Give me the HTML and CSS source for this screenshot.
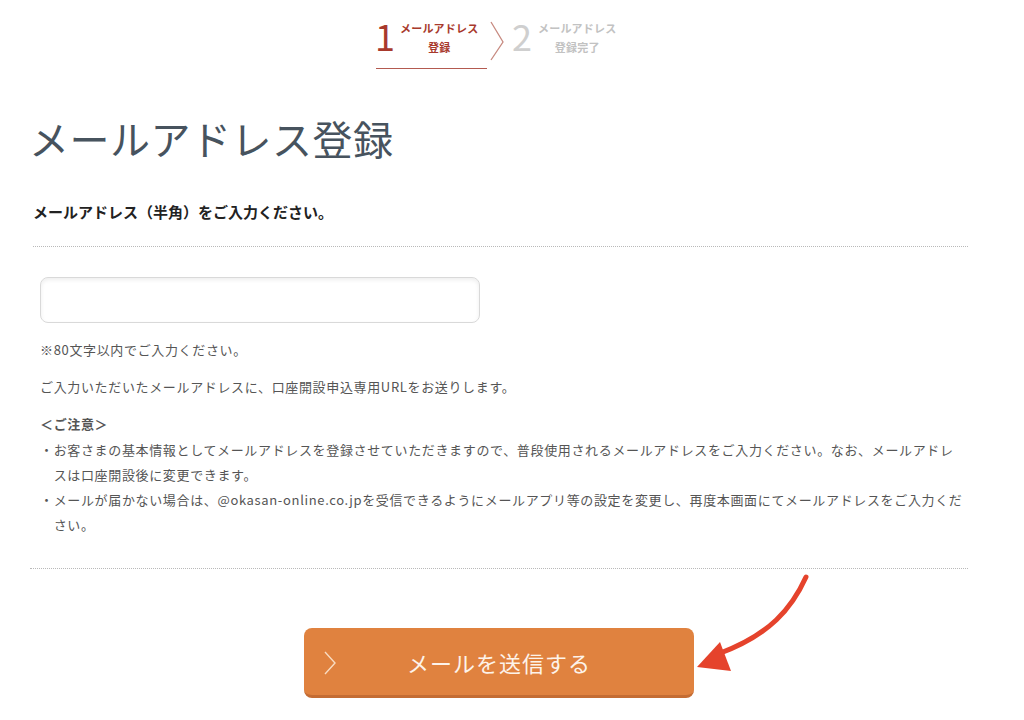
FILE: index.html
```html
<!DOCTYPE html>
<html lang="ja">
<head>
<meta charset="utf-8">
<title>メールアドレス登録</title>
<link rel="stylesheet" href="styles.css">
</head>
<body>
<div class="page">
  <nav class="steps">
    <div class="step step-active">
      <span class="step-num">1</span>
      <span class="step-label">メールアドレス<br>登録</span>
    </div>
    <svg class="step-sep" width="18" height="44" viewBox="0 0 18 44"><path d="M2 2 L14 22 L2 40" fill="none" stroke="#c78a80" stroke-width="1.3"/></svg>
    <div class="step step-next">
      <span class="step-num">2</span>
      <span class="step-label">メールアドレス<br>登録完了</span>
    </div>
  </nav>

  <h1 class="title">メールアドレス登録</h1>
  <p class="lead">メールアドレス（半角）をご入力ください。</p>

  <div class="form-area">
    <div class="input-box"></div>
    <p class="note note-first">※80文字以内でご入力ください。</p>
    <p class="note note-second">ご入力いただいたメールアドレスに、口座開設申込専用URLをお送りします。</p>
    <p class="caution-head">＜ご注意＞</p>
    <ul class="caution-list">
      <li>・お客さまの基本情報としてメールアドレスを登録させていただきますので、普段使用されるメールアドレスをご入力ください。なお、メールアドレ<br>スは口座開設後に変更できます。</li>
      <li>・メールが届かない場合は、@okasan-online.co.jpを受信できるようにメールアプリ等の設定を変更し、再度本画面にてメールアドレスをご入力くだ<br>さい。</li>
    </ul>
  </div>

  <div class="actions">
    <button class="send-btn" type="button">
      <svg class="btn-chev" width="14" height="24" viewBox="0 0 14 24"><path d="M2 1 L12 12 L2 23" fill="none" stroke="#f8dcc2" stroke-width="1.4"/></svg>
      <span class="btn-text">メールを送信する</span>
    </button>
  </div>
</div>

<svg class="annot" width="1024" height="720" viewBox="0 0 1024 720">
  <path d="M806 577 C 792 608, 770 635, 718 654" fill="none" stroke="#e5432c" stroke-width="5" stroke-linecap="round"/>
  <polygon points="697,667 720,642 731,671" fill="#e5432c"/>
</svg>
</body>
</html>
```

FILE: styles.css
```css
html, body {
  margin: 0;
  padding: 0;
  background: #ffffff;
}

body {
  font-family: "Noto Sans CJK JP", "Noto Sans", sans-serif;
  color: #333;
  width: 1024px;
  height: 720px;
  overflow: hidden;
  position: relative;
}

.page {
  width: 938px;
  margin-left: 30px;
}

/* step indicator */
.steps {
  display: flex;
  align-items: flex-start;
  height: 70px;
  margin-left: 346px;
}

.step {
  display: flex;
  align-items: flex-start;
}

.step-active {
  width: 111px;
  height: 68px;
  border-bottom: 1px solid #b35a50;
  box-sizing: content-box;
}

.step-num {
  font-size: 36px;
  line-height: 36px;
  margin-top: 17px;
  margin-left: -1px;
  font-weight: 400;
}

.step-label {
  font-size: 11px;
  line-height: 19px;
  font-weight: 700;
  text-align: center;
  margin-top: 19px;
  margin-left: 5px;
  letter-spacing: 0.2px;
}

.step-active .step-num { color: #a8392c; }
.step-active .step-label { color: #a8392c; }

.step-sep {
  margin-top: 20px;
  margin-left: 2px;
  margin-right: 5px;
}

.step-next .step-num { color: #cfcfcf; margin-left: 0; }
.step-next .step-label { color: #c2c2c2; margin-left: 6px; }

/* headings */
.title {
  margin: 44px 0 0 -1px;
  font-size: 40px;
  line-height: 48px;
  font-weight: 400;
  color: #47535e;
  letter-spacing: 0.5px;
}

.lead {
  margin: 39px 0 0 3px;
  font-size: 15px;
  line-height: 22px;
  font-weight: 700;
  color: #222;
  padding-bottom: 23px;
  border-bottom: 1px dotted #b9b9b9;
}

/* form */
.form-area {
  padding: 30px 0 31px 10px;
  border-bottom: 1px dotted #b9b9b9;
}

.input-box {
  width: 438px;
  height: 44px;
  border: 1px solid #d9d9d9;
  border-radius: 8px;
  box-shadow: inset 0 2px 4px rgba(0, 0, 0, 0.07);
  background: #fff;
}

.note {
  margin: 0;
  font-size: 13px;
  line-height: 20px;
  color: #555;
  letter-spacing: 0.65px;
}

.note-first { margin-top: 17px; }
.note-second { margin-top: 17px; }

.caution-head {
  margin: 14px 0 0 0;
  font-size: 13px;
  line-height: 25px;
  font-weight: 700;
  color: #555;
  letter-spacing: 0.65px;
}

.caution-list {
  list-style: none;
  margin: 1px 0 0 0;
  padding: 0;
}

.caution-list li {
  font-size: 13px;
  line-height: 25px;
  color: #555;
  letter-spacing: 0.65px;
  padding-left: 1.05em;
  text-indent: -1.05em;
  white-space: nowrap;
}

/* action */
.actions {
  display: flex;
  justify-content: center;
  padding-top: 59px;
}

.send-btn {
  display: flex;
  align-items: center;
  width: 390px;
  height: 70px;
  padding: 0 0 0 19px;
  border: none;
  border-bottom: 3px solid #c46c33;
  border-radius: 8px;
  background: #e0823f;
  font-family: inherit;
  cursor: pointer;
}

.btn-chev {
  flex: none;
  margin-top: 2px;
}

.btn-text {
  flex: 1;
  text-align: center;
  font-size: 22px;
  letter-spacing: 1px;
  color: #fdf3ea;
  margin-right: 33px;
}

/* annotation overlay */
.annot {
  position: absolute;
  left: 0;
  top: 0;
  pointer-events: none;
}
```
